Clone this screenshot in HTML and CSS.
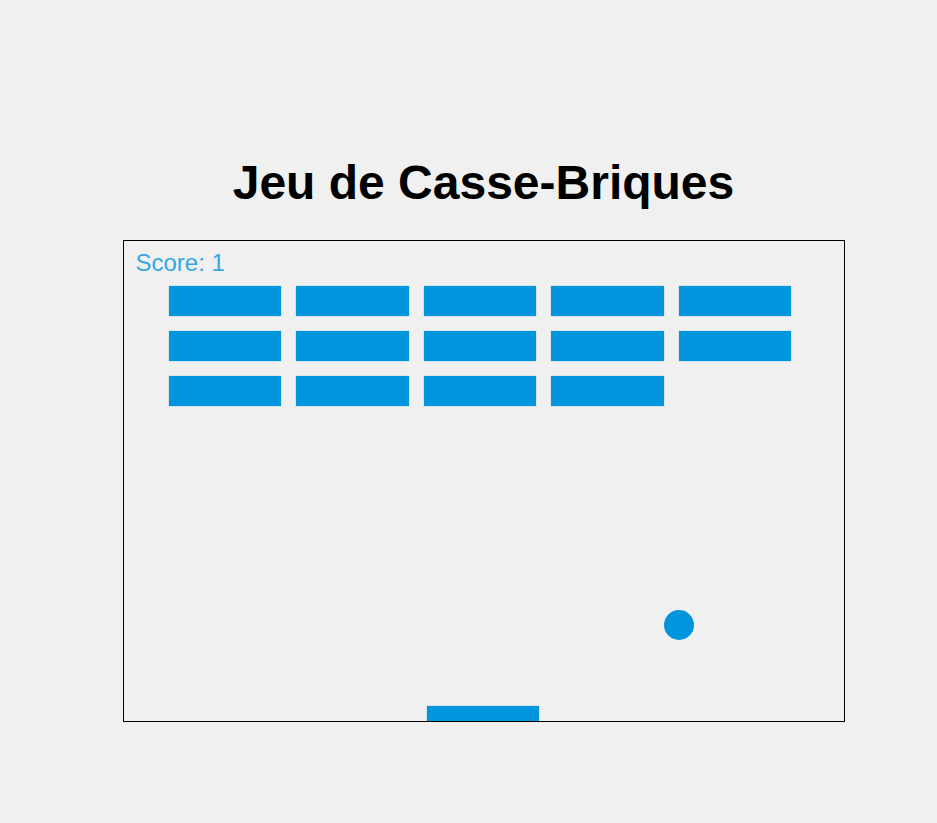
FILE: index.html
```html
<!DOCTYPE html>
<html lang="fr">
<head>
<meta charset="utf-8">
<title>Jeu de Casse-Briques</title>
<link rel="stylesheet" href="styles.css">
</head>
<body>
<main class="page">
  <h1 class="title">Jeu de Casse-Briques</h1>
  <div class="game">
    <div class="score">Score: 1</div>
    <div class="bricks">
      <div class="brick"></div><div class="brick"></div><div class="brick"></div><div class="brick"></div><div class="brick"></div>
      <div class="brick"></div><div class="brick"></div><div class="brick"></div><div class="brick"></div><div class="brick"></div>
      <div class="brick"></div><div class="brick"></div><div class="brick"></div><div class="brick"></div>
    </div>
    <div class="ball"></div>
    <div class="paddle"></div>
  </div>
</main>
</body>
</html>
```

FILE: styles.css
```css
html, body {
  margin: 0;
  padding: 0;
  background: #f0f0f0;
}

.page {
  display: flex;
  flex-direction: column;
  align-items: center;
  padding: 155px 0 0 30px;
  font-family: "Liberation Sans", Arial, sans-serif;
}

.title {
  margin: 0 0 30px;
  font-size: 48px;
  font-weight: bold;
  line-height: 55px;
  color: #000;
}

.game {
  position: relative;
  width: 720px;
  height: 480px;
  border: 1px solid #000;
  background: #f0f0f0;
  overflow: hidden;
}

.score {
  margin: 10px 0 0 12px;
  height: 24px;
  font-size: 24px;
  line-height: 24px;
  color: #35a7e3;
}

.bricks {
  display: grid;
  grid-template-columns: repeat(5, 112.5px);
  grid-auto-rows: 30px;
  column-gap: 15px;
  row-gap: 15px;
  margin: 11px 0 0 45px;
}

.brick {
  background: #0095dd;
  box-shadow: 0 0 1px rgba(0, 149, 221, 0.6);
}

.ball {
  position: absolute;
  left: 540px;
  top: 369px;
  width: 30px;
  height: 30px;
  border-radius: 50%;
  background: #0095dd;
}

.paddle {
  position: absolute;
  left: 303px;
  top: 465px;
  width: 112.5px;
  height: 15px;
  background: #0095dd;
  box-shadow: 0 0 1px rgba(0, 149, 221, 0.6);
}
```
